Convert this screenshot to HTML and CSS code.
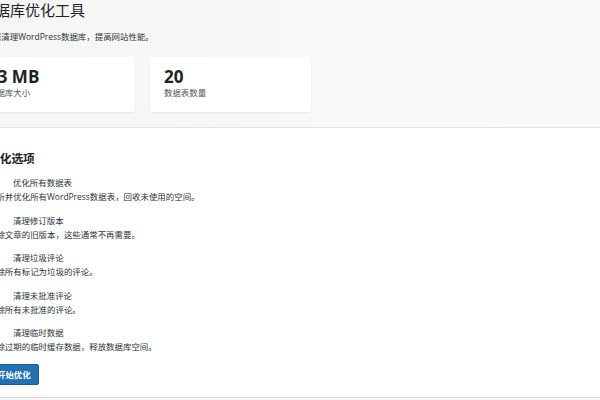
FILE: index.html
```html
<!DOCTYPE html>
<html lang="zh-CN">
<head>
<meta charset="utf-8">
<title>数据库优化工具</title>
<link rel="stylesheet" href="styles.css">
</head>
<body>
<div class="wrap">
  <header class="intro">
    <h1 class="title">数据库优化工具</h1>
    <p class="subtitle">帮助您清理WordPress数据库，提高网站性能。</p>
    <div class="stats">
      <div class="stat">
        <div class="stat-value">23 MB</div>
        <div class="stat-label">数据库大小</div>
      </div>
      <div class="stat">
        <div class="stat-value">20</div>
        <div class="stat-label">数据表数量</div>
      </div>
    </div>
  </header>

  <section class="panel">
    <h2 class="panel-title">优化选项</h2>
    <div class="option">
      <label class="option-label"><input type="checkbox" class="check" checked>优化所有数据表</label>
      <p class="option-desc">分析并优化所有WordPress数据表，回收未使用的空间。</p>
    </div>
    <div class="option">
      <label class="option-label"><input type="checkbox" class="check" checked>清理修订版本</label>
      <p class="option-desc">删除文章的旧版本，这些通常不再需要。</p>
    </div>
    <div class="option">
      <label class="option-label"><input type="checkbox" class="check" checked>清理垃圾评论</label>
      <p class="option-desc">删除所有标记为垃圾的评论。</p>
    </div>
    <div class="option">
      <label class="option-label"><input type="checkbox" class="check" checked>清理未批准评论</label>
      <p class="option-desc">删除所有未批准的评论。</p>
    </div>
    <div class="option">
      <label class="option-label"><input type="checkbox" class="check" checked>清理临时数据</label>
      <p class="option-desc">删除过期的临时缓存数据，释放数据库空间。</p>
    </div>
    <button class="button-primary" type="button">开始优化</button>
  </section>
</div>
</body>
</html>
```

FILE: styles.css
```css
html, body {
  margin: 0;
  padding: 0;
}

body {
  background: #f7f7f7;
  font-family: "Open Sans", "Noto Sans CJK SC", sans-serif;
  color: #1d2327;
  overflow: hidden;
}

.wrap {
  margin-left: -26px;
}

.intro {
  padding-bottom: 15px;
  background: linear-gradient(to right, #f5f5f5 0%, #f8f8f8 55%, #fafafa 100%);
}

.title {
  margin: 0;
  padding-left: 6px;
  font-size: 15px;
  line-height: 20px;
  font-weight: 400;
  color: #1d2327;
}

.subtitle {
  margin: 10px 0 0;
  padding-left: 2px;
  font-size: 8.45px;
  line-height: 13px;
  color: #2c3338;
}

.stats {
  display: flex;
  gap: 15px;
  margin-top: 14px;
}

.stat {
  width: 161px;
  box-sizing: border-box;
  padding: 10px 14px 13px;
  background: #fff;
  border-radius: 2px;
  box-shadow: 0 1px 2px rgba(0, 0, 0, 0.08);
}

.stat-value {
  font-size: 17px;
  line-height: 20px;
  font-weight: 700;
  color: #1d2327;
}

.stat-label {
  font-size: 8.45px;
  line-height: 12px;
  color: #50575e;
}

.panel {
  background: #fff;
  border-top: 1px solid #e2e2e2;
  border-bottom: 1px solid #dcdcde;
  padding: 22px 0 12px 14px;
}

.panel-title {
  margin: 0 0 11px;
  font-size: 11.7px;
  line-height: 16px;
  font-weight: 700;
  color: #1d2327;
}

.option {
  margin-bottom: 10.5px;
}

.option-label {
  display: flex;
  align-items: center;
  font-size: 8.45px;
  line-height: 12px;
  color: #2c3338;
}

.check {
  width: 10px;
  height: 10px;
  margin: 0 15px 0 0;
}

.option-desc {
  margin: 1px 0 0;
  font-size: 8.45px;
  line-height: 14px;
  color: #2c3338;
}

.button-primary {
  display: block;
  margin-top: -1px;
  height: 21px;
  padding: 0 7px 0 8px;
  font-family: inherit;
  font-size: 8.45px;
  font-weight: 600;
  color: #fff;
  background: #2271b1;
  border: 1px solid #1d5f95;
  border-radius: 2px;
}
```
